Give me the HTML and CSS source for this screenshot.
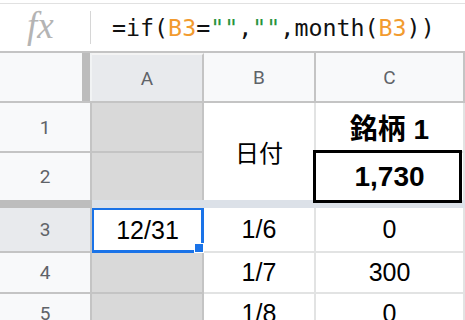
FILE: index.html
```html
<!DOCTYPE html>
<html lang="ja">
<head>
    <meta charset="UTF-8">
    <meta name="viewport" content="width=device-width, initial-scale=1.0">
    <title>Sheet</title>
    <link rel="stylesheet" href="styles.css">
</head>
<body>

    <div class="formula-bar">
        <span class="fx">fx</span>
        <span class="fx-sep"></span>
        <span class="formula">=if(<span class="ref">B3</span>=<span class="str">""</span>,<span class="str">""</span>,month(<span class="ref">B3</span>))</span>
    </div>

    <div class="sheet">
        <div class="corner"></div>
        <div class="col-head selected">A</div>
        <div class="col-head">B</div>
        <div class="col-head">C</div>

        <div class="row-head">1</div>
        <div class="cell grey"></div>
        <div class="cell merged">日付</div>
        <div class="cell bold">銘柄 1</div>

        <div class="row-head last">2</div>
        <div class="cell grey last"></div>
        <div class="cell bold boxed last">1,730</div>

        <div class="freeze"></div>

        <div class="row-head selected">3</div>
        <div class="cell active">12/31</div>
        <div class="cell">1/6</div>
        <div class="cell">0</div>

        <div class="row-head">4</div>
        <div class="cell grey"></div>
        <div class="cell">1/7</div>
        <div class="cell">300</div>

        <div class="row-head">5</div>
        <div class="cell grey"></div>
        <div class="cell">1/8</div>
        <div class="cell">0</div>
    </div>

</body>
</html>
```

FILE: styles.css
```css
body {
    margin: 0;
    background: #fff;
    font-family: "Liberation Sans", "Noto Sans CJK JP", sans-serif;
    overflow: hidden;
}
.formula-bar {
    height: 47px;
    margin-top: 3px;
    border-top: 1px solid #e1e1e1;
    display: flex;
    align-items: center;
}
.fx {
    width: 90px;
    padding-left: 27px;
    box-sizing: border-box;
    font-family: "Liberation Serif", serif;
    font-style: italic;
    font-size: 37px;
    color: #b4b4b4;
    margin-top: -4px;
}
.fx-sep {
    width: 1px;
    height: 33px;
    background: #d6d6d6;
    margin-right: 21px;
}
.formula {
    font-family: "DejaVu Sans Mono", monospace;
    font-size: 23.3px;
    color: #111;
}
.ref {
    color: #f29b2f;
}
.str {
    color: #27943f;
}
.sheet {
    display: grid;
    grid-template-columns: 92px 112px 112px 149px;
    grid-template-rows: 50px 50px 47px 8px 45px 41px 40px;
    border-top: 2px solid #c4c4c4;
}
.corner {
    background: linear-gradient(to right, #f8f9fa 82px, #bcbcbc 82px 90px, #f1f3f4 90px);
    border-bottom: 2px solid #c4c4c4;
}
.col-head {
    display: flex;
    align-items: center;
    justify-content: center;
    background: #f8f9fa;
    border-right: 2px solid #c4c4c4;
    border-bottom: 2px solid #c4c4c4;
    font-family: Roboto, sans-serif;
    font-size: 19px;
    color: #5f6368;
}
.col-head.selected {
    background: #e8eaed;
    border-top: 2px solid #f4f4f4;
}
.row-head {
    display: flex;
    align-items: center;
    justify-content: center;
    background: #f8f9fa;
    border-right: 2px solid #c4c4c4;
    border-bottom: 2px solid #c4c4c4;
    font-family: Roboto, sans-serif;
    font-size: 19px;
    color: #5f6368;
}
.row-head.selected {
    background: #e8eaed;
}
.cell {
    display: flex;
    align-items: center;
    justify-content: center;
    border-right: 2px solid #e2e3e3;
    border-bottom: 2px solid #e2e3e3;
    font-size: 25px;
    color: #000;
}
.last {
    border-bottom: none;
}
.cell.grey {
    background: #d9d9d9;
    border-color: #c4c4c4;
}
.cell.merged {
    grid-row: span 2;
    border-bottom: none;
    font-size: 24px;
}
.cell.bold {
    font-weight: bold;
    font-size: 28px;
}
.cell.boxed {
    position: relative;
}
.cell.boxed::after {
    content: "";
    position: absolute;
    left: -3px;
    top: -3px;
    right: 1px;
    bottom: -3px;
    border: 3px solid #000;
}
.freeze {
    grid-column: 1 / -1;
    background: linear-gradient(to right, #bdbdbd 92px, #dce1e8 92px);
}
.cell.active {
    position: relative;
    border: 2px solid #1a73e8;
    border-right-width: 3px;
    border-bottom-width: 3px;
}
.cell.active::after {
    content: "";
    position: absolute;
    right: -3px;
    bottom: -3px;
    width: 8px;
    height: 8px;
    background: #1a73e8;
    border: 1px solid #fff;
}
```
